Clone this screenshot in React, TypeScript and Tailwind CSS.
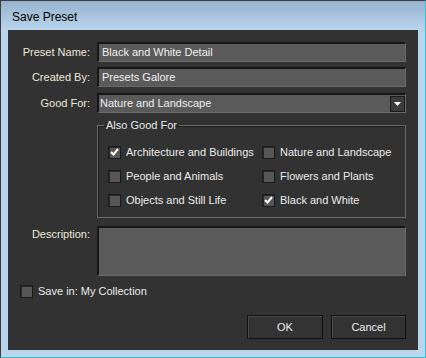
import React from "react";

const font = { fontFamily: '"Liberation Sans", Arial, sans-serif' };

function Check({ checked }: { checked?: boolean }) {
  return (
    <div className="w-[13px] h-[13px] shrink-0 border border-[#1a1a1a] bg-[#565656] shadow-[inset_1px_1px_0_#2a2a2a] flex items-center justify-center">
      {checked && (
        <svg width="9" height="8" viewBox="0 0 9 8">
          <path d="M1 4 L3.5 6.5 L8 1" stroke="#ffffff" strokeWidth="2" fill="none" />
        </svg>
      )}
    </div>
  );
}

function Field({ label, children }: { label: string; children: React.ReactNode }) {
  return (
    <div className="flex items-center">
      <div className="w-[82px] text-right text-[#ece9d8] whitespace-nowrap">{label}</div>
      <div className="ml-[7px] w-[309px]">{children}</div>
    </div>
  );
}

function Input({ value }: { value: string }) {
  return (
    <div className="h-[20px] bg-[#5a5a5a] border-t-2 border-l-2 border-t-[#161616] border-l-[#161616] border-b border-r border-b-[#6a6a6a] border-r-[#6a6a6a] flex items-center pl-[3px] text-[#f0f0f0] whitespace-nowrap">
      {value}
    </div>
  );
}

function CheckRow({ label, checked }: { label: string; checked?: boolean }) {
  return (
    <div className="flex items-center gap-[5px] h-[24px] whitespace-nowrap">
      <Check checked={checked} />
      <span className="text-[#ebebeb]">{label}</span>
    </div>
  );
}

export default function App() {
  return (
    <div className="w-[426px] h-[358px] bg-[#b9d5ec] relative text-[11px]" style={font}>
      <div className="w-full h-full flex flex-col border border-[#3c3c3c] border-r-[#2ec4d8] border-b-[#2ec4d8]">
        <div className="h-[29px] shrink-0 bg-gradient-to-b from-[#97b2ce] to-[#b9d5ec] flex items-center pl-[11px] pt-[2px] text-[12px] text-black">
          Save Preset
        </div>
        <div className="mx-[7px] h-[320px] bg-[#323232] flex flex-col pt-[12px] leading-none">
          <div className="flex flex-col gap-[5px]">
            <Field label="Preset Name:">
              <Input value="Black and White Detail" />
            </Field>
            <Field label="Created By:">
              <Input value="Presets Galore" />
            </Field>
            <div className="mt-[1px]">
              <Field label="Good For:">
                <div className="h-[20px] bg-[#5a5a5a] border-t-2 border-l-2 border-t-[#161616] border-l-[#161616] border-b border-r border-b-[#6a6a6a] border-r-[#6a6a6a] flex items-center text-[#f0f0f0]">
                  <span className="pl-[1px] flex-1">Nature and Landscape</span>
                  <div className="w-[15px] h-[16px] bg-[#3c3c3c] border border-[#1a1a1a] flex items-center justify-center">
                    <svg width="7" height="4" viewBox="0 0 7 4">
                      <path d="M0 0 H7 L3.5 4 Z" fill="#ffffff" />
                    </svg>
                  </div>
                </div>
              </Field>
            </div>
          </div>
          <div className="ml-[89px] w-[309px] mt-[7px]">
            <fieldset className="border border-[#6a6a6a] h-[98px] px-[10px] pt-[9px] shadow-[inset_1px_1px_0_#1e1e1e]">
              <legend className="ml-[-4px] px-[2px] text-[#ebebeb]">Also Good For</legend>
              <div className="grid grid-cols-[154px_1fr]">
                <div className="flex flex-col">
                  <CheckRow label="Architecture and Buildings" checked />
                  <CheckRow label="People and Animals" />
                  <CheckRow label="Objects and Still Life" />
                </div>
                <div className="flex flex-col">
                  <CheckRow label="Nature and Landscape" />
                  <CheckRow label="Flowers and Plants" />
                  <CheckRow label="Black and White" checked />
                </div>
              </div>
            </fieldset>
          </div>
          <div className="flex mt-[8px]">
            <div className="w-[82px] text-right text-[#ece9d8] pt-[3px]">Description:</div>
            <div className="ml-[7px] w-[309px] h-[50px] bg-[#5a5a5a] border-t-2 border-l-2 border-t-[#161616] border-l-[#161616] border-b border-r border-b-[#6a6a6a] border-r-[#6a6a6a]" />
          </div>
          <div className="flex items-center gap-[5px] ml-[12px] mt-[9px]">
            <Check />
            <span className="text-[#ebebeb]">Save in: My Collection</span>
          </div>
          <div className="flex justify-end gap-[8px] mr-[12px] mt-[17px]">
            <button className="w-[76px] h-[24px] bg-[#333333] border border-[#111111] shadow-[inset_1px_1px_0_#4a4a4a] text-[#ebebeb] text-[11px]">
              OK
            </button>
            <button className="w-[75px] h-[24px] bg-[#333333] border border-[#111111] shadow-[inset_1px_1px_0_#4a4a4a] text-[#ebebeb] text-[11px]">
              Cancel
            </button>
          </div>
        </div>
      </div>
    </div>
  );
}
